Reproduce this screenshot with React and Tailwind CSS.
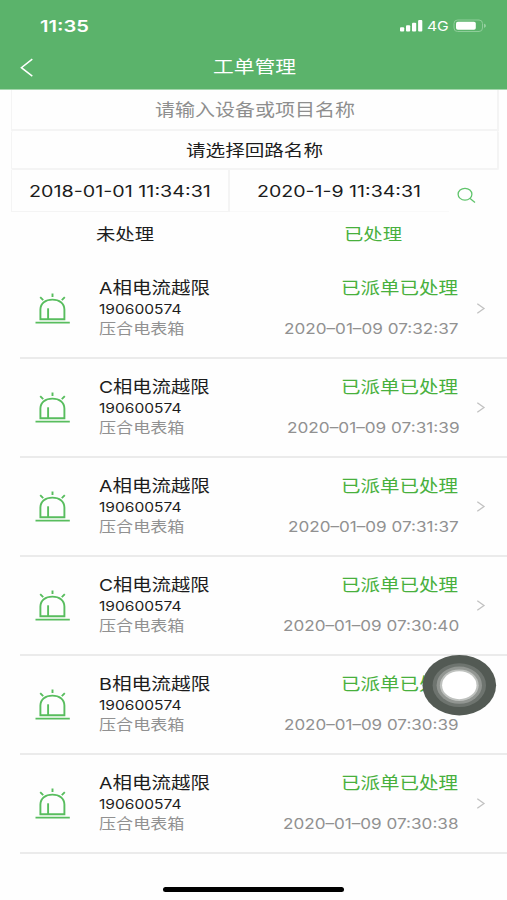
import { useLayoutEffect, useRef, useState } from "react";

// Single line of text stretched horizontally to fill a given width.
function Fit({ w, className = "", children }) {
  const ref = useRef(null);
  const [scale, setScale] = useState(1);
  useLayoutEffect(() => {
    setScale(w / ref.current.offsetWidth);
  }, [w]);
  return (
    <span className={"block shrink-0 whitespace-nowrap " + className} style={{ width: w }}>
      <span ref={ref} className="inline-block origin-left align-top" style={{ transform: `scaleX(${scale})` }}>
        {children}
      </span>
    </span>
  );
}

const orders = [
  { phase: "A", time: "2020–01–09 07:32:37", w: 175 },
  { phase: "C", time: "2020–01–09 07:31:39", w: 172 },
  { phase: "A", time: "2020–01–09 07:31:37", w: 171 },
  { phase: "C", time: "2020–01–09 07:30:40", w: 176 },
  { phase: "B", time: "2020–01–09 07:30:39", w: 175 },
  { phase: "A", time: "2020–01–09 07:30:38", w: 176 },
];

function AlarmIcon() {
  return (
    <svg className="mt-[32px] h-[34px] w-[36px]" viewBox="0 0 36 34" fill="none" stroke="#58bd5e" strokeWidth="1.9">
      <path d="M5.4 27.2V17.6C5.4 11.2 10.5 7.6 17.4 7.6S29.4 11.2 29.4 17.6v9.6Z" />
      <path d="M13.1 27V16.3" />
      <path d="M.5 30.6h34.3" />
      <path d="M17.5 1.4v3.6M5.2 5.2l3 3M29.8 5.2l-3 3" />
    </svg>
  );
}

function Order({ order }) {
  return (
    <div className="ml-5 flex h-[99px] shrink-0 border-b-2 border-[#ebebeb]">
      <div className="w-[79px] pl-[15px]">
        <AlarmIcon />
      </div>
      <div className="w-[150px]">
        <Fit w={111} className="mt-[17px] h-[22px] text-[16.5px] leading-[22px] text-[#1c1c1c]">{order.phase}相电流越限</Fit>
        <Fit w={83} className="h-[20px] text-[13.5px] leading-[20px] text-[#1c1c1c]">190600574</Fit>
        <Fit w={86} className="h-[20px] text-[14.5px] leading-[20px] text-[#919191]">压合电表箱</Fit>
      </div>
      <div className="flex w-[210px] flex-col items-end pr-[1px]">
        <Fit w={117} className="mt-[17px] h-[22px] text-[17px] leading-[22px] text-[#48b03d]">已派单已处理</Fit>
        <Fit w={order.w} className="relative left-[0.5px] mt-[20px] h-[20px] text-[14px] leading-[20px] text-[#919191]">{order.time}</Fit>
      </div>
      <svg className="mt-[42px] ml-[17px] h-[13px] w-[10px]" viewBox="0 0 10 13" fill="none" stroke="#c2c2c2" strokeWidth="1.3">
        <path d="M1.3 1.7L8 6.5L1.3 11.3" />
      </svg>
    </div>
  );
}

export default function App() {
  return (
    <div className="relative flex h-[900px] w-[507px] flex-col overflow-hidden bg-[#fefefe] font-['Inter','Noto_Sans_CJK_SC',sans-serif]">
      <header className="h-[90px] shrink-0 border-b border-[#a5d7ae] bg-[#5bb36b] text-white">
        <div className="flex h-[48px] pt-[16px] pl-[40px]">
          <Fit w={49} className="text-[16px] leading-[20px] font-semibold">11:35</Fit>
          <svg className="mt-[4px] ml-[310px] h-[12px] w-[25px]" viewBox="0 0 25 12" fill="#fff">
            <rect x="1" y="7.3" width="4.2" height="4.2" rx="1" />
            <rect x="7" y="5.2" width="4.2" height="6.3" rx="1" />
            <rect x="13" y="2.7" width="4.2" height="8.8" rx="1" />
            <rect x="19.1" y="0" width="4.2" height="11.5" rx="1" />
          </svg>
          <Fit w={22} className="ml-[3px] text-[13.5px] leading-[21px]">4G</Fit>
          <svg className="mt-[3px] ml-[4px] h-[14px] w-[34px]" viewBox="0 0 34 14" fill="none">
            <rect x="1" y="1" width="28.5" height="11.5" rx="3.5" stroke="#8fcd9a" strokeWidth="1" />
            <rect x="3" y="2.7" width="19.8" height="8.1" rx="1.8" fill="#fff" />
            <path d="M31.2 4.8c2 .6 2 3.4 0 4Z" fill="#a5d7ae" />
          </svg>
        </div>
        <div className="flex h-[38px] items-center pl-[20px]">
          <svg className="h-[20px] w-[14px]" viewBox="0 0 14 20" fill="none" stroke="#fff" strokeWidth="1.5">
            <path d="M12.3 2.2L1.4 10.7L12.3 19.1" />
          </svg>
          <Fit w={83} className="ml-[179px] text-[17px] leading-[24px]">工单管理</Fit>
        </div>
      </header>

      <section className="mr-[8px] ml-[11px] shrink-0">
        <div className="flex h-[41px] justify-center border-r-2 border-b-2 border-l border-[#f4f4f4] pt-[8px]">
          <Fit w={200} className="text-[17px] leading-[24px] text-[#8e8e8e]">请输入设备或项目名称</Fit>
        </div>
        <div className="flex h-[39px] justify-center rounded-[2px] border-r-2 border-b-2 border-l border-[#f4f4f4] pt-[7px]">
          <Fit w={137} className="text-[16px] leading-[24px] text-[#1c1c1c]">请选择回路名称</Fit>
        </div>
        <div className="flex h-[42px] text-[15.5px] leading-[24px] text-[#1c1c1c]">
          <div className="w-[219px] border-r-2 border-b border-l border-[#f4f4f4] pt-[10px] pl-[17px]">
            <Fit w={182}>2018-01-01 11:34:31</Fit>
          </div>
          <div className="w-[219px] border-b border-[#f9f9f9] pt-[10px] pl-[27px]">
            <Fit w={164}>2020-1-9 11:34:31</Fit>
          </div>
          <svg className="mt-[17px] ml-[8px] h-[17px] w-[19px]" viewBox="0 0 19 17" fill="none" stroke="#60c46c" strokeWidth="1.3">
            <ellipse cx="8" cy="7.2" rx="6.9" ry="5.9" />
            <path d="M12.8 11.3L18 15.5" />
          </svg>
        </div>
      </section>

      <nav className="flex h-[48px] shrink-0 pt-[10px] text-[16px] leading-[24px]">
        <Fit w={58} className="ml-[96px] text-[#1c1c1c]">未处理</Fit>
        <Fit w={58} className="ml-[190px] text-[#48b03d]">已处理</Fit>
      </nav>

      <main className="flex flex-col">
        {orders.map((order, i) => (
          <Order key={i} order={order} />
        ))}
      </main>

      <div className="mt-[33px] ml-[163px] h-[5px] w-[181px] rounded-full bg-black" />

      {/* Floating assistive touch button */}
      <svg className="absolute top-[655px] left-[422px] h-[61px] w-[75px]" viewBox="0 0 75 61">
        <ellipse cx="37.3" cy="30.2" rx="36.8" ry="30.2" fill="#535a54" />
        <ellipse cx="37.3" cy="30.2" rx="26.7" ry="21.9" fill="#6e746f" />
        <ellipse cx="37.3" cy="30.2" rx="22.7" ry="18.6" fill="#929692" />
        <ellipse cx="37.3" cy="30.2" rx="19.4" ry="15.8" fill="#bec1be" />
        <ellipse cx="37.3" cy="30.2" rx="17.2" ry="14" fill="#fff" />
      </svg>
    </div>
  );
}
